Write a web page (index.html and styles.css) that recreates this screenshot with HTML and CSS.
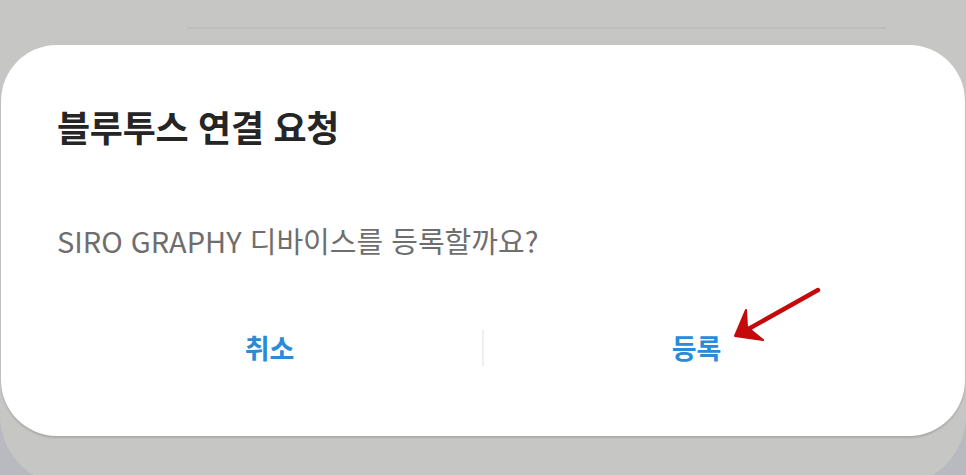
FILE: index.html
```html
<!DOCTYPE html>
<html lang="ko">
<head>
<meta charset="utf-8">
<link rel="stylesheet" href="styles.css">
</head>
<body>
<div class="backdrop">
  <div class="topbar"><div class="topline"></div></div>
  <div class="dialog">
    <h1 class="title">블루투스 연결 요청</h1>
    <p class="message">SIRO GRAPHY 디바이스를 등록할까요?</p>
    <div class="actions">
      <div class="btn">취소</div>
      <div class="divider"></div>
      <div class="btn btn-register">등록
        <svg class="arrow" width="100" height="70" viewBox="0 0 100 70">
          <path d="M95 15 L20 57" stroke="#c40a0a" stroke-width="4.5" stroke-linecap="round" fill="none"/>
          <path d="M12 61 L23 35 L24 52 L40 65 Z" fill="#c40a0a" stroke="#c40a0a" stroke-width="2" stroke-linejoin="round"/>
        </svg>
      </div>
    </div>
  </div>
</div>
</body>
</html>
```
FILE: styles.css
```css
html, body {
  margin: 0;
  padding: 0;
}
body {
  width: 966px;
  height: 475px;
  overflow: hidden;
  background: #b9bac0;
  font-family: "Noto Sans CJK KR", "Noto Sans", sans-serif;
}
.backdrop {
  height: 486px;
  background: #c6c6c4;
  border-radius: 0 0 71px 71px;
}
.topbar {
  height: 45px;
  display: flex;
  flex-direction: column;
  padding-left: 187px;
  box-sizing: border-box;
}
.topline {
  margin-top: 27px;
  width: 699px;
  height: 2px;
  background: #bdbdbb;
}
.dialog {
  margin: 0 1px 0 1px;
  height: 391px;
  background: #ffffff;
  border-radius: 56px;
  box-shadow: 0 2px 2px rgba(0, 0, 0, 0.14);
  padding: 63px 56px 0 56px;
  box-sizing: border-box;
}
.title {
  margin: 0;
  font-size: 36px;
  line-height: 36px;
  font-weight: 700;
  color: #252525;
  letter-spacing: -0.3px;
}
.message {
  margin: 82px 0 0 0;
  font-size: 29px;
  line-height: 29px;
  font-weight: 400;
  color: #6e6e6e;
}
.actions {
  margin-top: 75px;
  display: flex;
  align-items: center;
}
.btn {
  flex: 1;
  text-align: center;
  font-size: 27px;
  line-height: 30px;
  font-weight: 700;
  color: #2a8bd8;
  position: relative;
}
.btn-register {
  padding-top: 0;
}
.divider {
  width: 2px;
  height: 36px;
  background: #efefef;
}
.arrow {
  position: absolute;
  left: 239px;
  top: -58px;
}
```
